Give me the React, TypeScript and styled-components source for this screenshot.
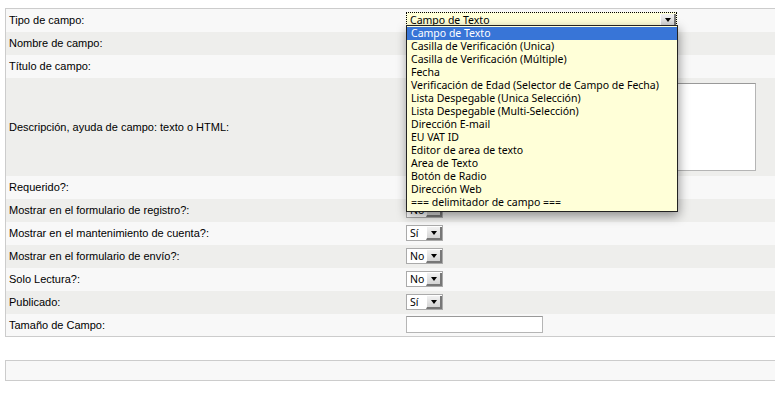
import React from 'react';
import styled, { createGlobalStyle } from 'styled-components';

const GlobalStyle = createGlobalStyle`
  html, body {
    margin: 0;
    padding: 0;
    background: #fff;
    overflow: hidden;
  }
  body {
    font-family: 'Liberation Sans', Arial, sans-serif;
    font-size: 11px;
    color: #000;
  }
`;

const Page = styled('div')`
  padding: 8px 0 0 5px;
  width: 820px;
`;

const FormTable = styled('table')`
  width: 800px;
  border-collapse: collapse;
  border: 1px solid #cccccc;
`;

const Row = styled('tr')<{ $alt?: boolean; $height?: number }>`
  height: ${(p) => p.$height || 23}px;
  background: ${(p) => (p.$alt ? '#eeeeec' : '#f8f8f8')};
`;

const LabelCell = styled('td')`
  width: 397px;
  padding: 0 0 0 3px;
  vertical-align: middle;
  white-space: nowrap;
`;

const FieldCell = styled('td')`
  padding: 0;
  vertical-align: middle;
  position: relative;
`;

const Select = styled('div')<{ $width: number; $focused?: boolean }>`
  position: relative;
  display: flex;
  align-items: stretch;
  box-sizing: border-box;
  width: ${(p) => p.$width}px;
  height: 16px;
  background: ${(p) => (p.$focused ? '#ffffd8' : '#fff')};
  border: ${(p) => (p.$focused ? '1px dotted #000' : '1px solid #aaa')};
  font-family: 'Noto Sans', 'DejaVu Sans', sans-serif;
  font-size: 10.5px;
  line-height: 14px;
`;

const SelectText = styled('span')`
  flex: 1;
  padding-left: 3px;
  overflow: hidden;
  white-space: nowrap;
`;

const Arrow = styled('span')`
  width: 13px;
  margin: 1px 0 0 0;
  background: linear-gradient(#f2f2f2, #d4d4d4);
  border-right: 2px solid #777;
  border-bottom: 2px solid #777;
  border-left: 1px solid #fff;
  display: flex;
  align-items: center;
  justify-content: center;
  &::after {
    content: '';
    border-left: 3.5px solid transparent;
    border-right: 3.5px solid transparent;
    border-top: 4px solid #000;
  }
`;

const TextInput = styled('div')<{ $width: number }>`
  box-sizing: border-box;
  width: ${(p) => p.$width}px;
  height: 17px;
  background: #fff;
  border: 1px solid #b5b5b5;
  border-top-color: #999;
`;

const TextArea = styled('div')`
  box-sizing: border-box;
  width: 350px;
  height: 88px;
  background: #fff;
  border: 1px solid #b5b5b5;
  border-top-color: #999;
`;

const Popup = styled('ul')`
  position: absolute;
  left: 0;
  top: 16px;
  z-index: 10;
  box-sizing: border-box;
  width: 272px;
  margin: 0;
  padding: 1px 0 2px;
  list-style: none;
  background: #ffffd8;
  border: 1px solid #222;
  box-shadow: 1px 4px 10px rgba(0, 0, 0, 0.4);
  font-family: 'Noto Sans', 'DejaVu Sans', sans-serif;
  font-size: 10.5px;
`;

const Option = styled('li')<{ $selected?: boolean }>`
  height: 13px;
  line-height: 13px;
  padding-left: 4px;
  white-space: nowrap;
  background: ${(p) => (p.$selected ? '#3875d7' : 'transparent')};
  color: ${(p) => (p.$selected ? '#fff' : '#000')};
`;

const Footer = styled('div')`
  box-sizing: border-box;
  width: 800px;
  height: 21px;
  margin-top: 23px;
  background: #f8f8f8;
  border: 1px solid #cccccc;
`;

const options = [
  'Campo de Texto',
  'Casilla de Verificación (Unica)',
  'Casilla de Verificación (Múltiple)',
  'Fecha',
  'Verificación de Edad (Selector de Campo de Fecha)',
  'Lista Despegable (Unica Selección)',
  'Lista Despegable (Multi-Selección)',
  'Dirección E-mail',
  'EU VAT ID',
  'Editor de area de texto',
  'Area de Texto',
  'Botón de Radio',
  'Dirección Web',
  '=== delimitador de campo ===',
];

const yesNo: [string, string][] = [
  ['Requerido?:', 'No'],
  ['Mostrar en el formulario de registro?:', 'No'],
  ['Mostrar en el mantenimiento de cuenta?:', 'Sí'],
  ['Mostrar en el formulario de envío?:', 'No'],
  ['Solo Lectura?:', 'No'],
  ['Publicado:', 'Sí'],
];

function SmallSelect({ value }: { value: string }) {
  return (
    <Select $width={37}>
      <SelectText>{value}</SelectText>
      <Arrow />
    </Select>
  );
}

export default function App() {
  return (
    <Page>
      <GlobalStyle />
      <FormTable>
        <tbody>
          <Row>
            <LabelCell>Tipo de campo:</LabelCell>
            <FieldCell>
              <Select $width={271} $focused>
                <SelectText>Campo de Texto</SelectText>
                <Arrow />
              </Select>
              <Popup>
                {options.map((o, i) => (
                  <Option key={o} $selected={i === 0}>{o}</Option>
                ))}
              </Popup>
            </FieldCell>
          </Row>
          <Row $alt>
            <LabelCell>Nombre de campo:</LabelCell>
            <FieldCell><TextInput $width={137} /></FieldCell>
          </Row>
          <Row>
            <LabelCell>Título de campo:</LabelCell>
            <FieldCell><TextInput $width={137} /></FieldCell>
          </Row>
          <Row $alt $height={98}>
            <LabelCell>Descripción, ayuda de campo: texto o HTML:</LabelCell>
            <FieldCell><TextArea /></FieldCell>
          </Row>
          {yesNo.map(([label, value], i) => (
            <Row key={label} $alt={i % 2 === 1}>
              <LabelCell>{label}</LabelCell>
              <FieldCell><SmallSelect value={value} /></FieldCell>
            </Row>
          ))}
          <Row>
            <LabelCell>Tamaño de Campo:</LabelCell>
            <FieldCell><TextInput $width={137} /></FieldCell>
          </Row>
        </tbody>
      </FormTable>
      <Footer />
    </Page>
  );
}
